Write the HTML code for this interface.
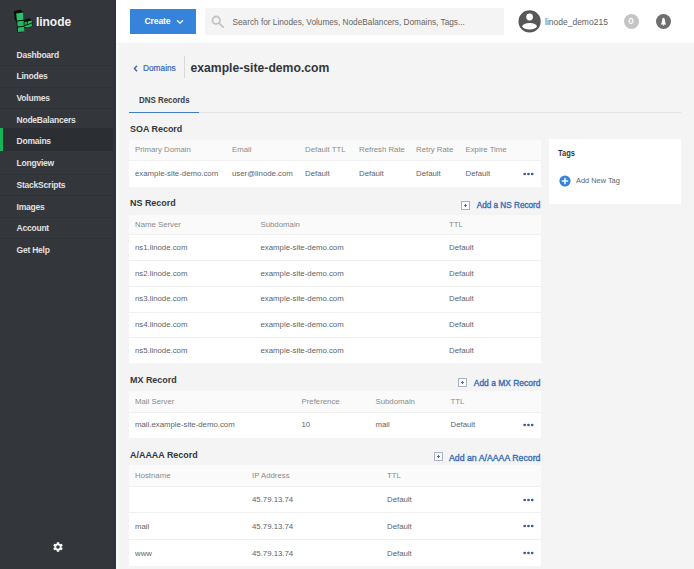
<!DOCTYPE html>
<html><head><meta charset="utf-8">
<style>
*{margin:0;padding:0;box-sizing:border-box}
html,body{width:694px;height:569px;overflow:hidden;background:#f4f4f4;font-family:"Liberation Sans",sans-serif}
.a{position:absolute}
#side{left:0;top:0;width:116px;height:569px;background:#33373c}
.nav{left:0;width:116px;height:22px;line-height:22px;padding-left:16.5px;color:#e0e0e0;font-weight:bold;font-size:8.5px;letter-spacing:-0.22px;white-space:nowrap}
.sep{left:0;width:116px;height:1px;background:#2e3237}
#hdr{left:116px;top:0;width:578px;height:43px;background:#fff;box-shadow:0 1px 1px rgba(0,0,0,0.015)}
.t{white-space:nowrap}
.sec{font-weight:bold;color:#32363c;font-size:9.9px;line-height:12px;transform:scaleX(0.905);transform-origin:0 50%}
.tbl{background:#fff}
.th{background:#fafafa;color:#8a8a8a;font-size:7.8px}
.td{color:#606469;font-size:7.8px}
.row{left:0;width:412px;border-top:1px solid #f0f0f0}
.cell{position:absolute;white-space:nowrap;margin-top:-0.5px}
.th .cell{margin-top:0px}
.dots{position:absolute;width:12px;height:6px}
.dots i{position:absolute;top:-1.5px;width:2.8px;height:2.8px;border-radius:50%;background:#3a64a8}
.add{color:#3a6db8;font-weight:normal;-webkit-text-stroke:0.35px #3a6db8;font-size:7.8px;line-height:12px;margin-top:1.8px}
.pbox{position:absolute;width:9px;height:9px;border:1px solid #aab3c4;background:#fafcff}
.pbox:before{content:"";position:absolute;left:2px;top:3px;width:3px;height:1px;background:#5b6aa3}
.pbox:after{content:"";position:absolute;left:3px;top:2px;width:1px;height:3px;background:#5b6aa3}
</style></head><body>
<div id="side" class="a">
  <!-- logo -->
  <svg class="a" style="left:0;top:0" width="40" height="40" viewBox="0 0 40 40">
    <polygon points="13.8,11.2 20,9.6 23.6,12.2 23.9,32 17.6,32.6 16.2,21.5 14.6,19.5" fill="#0b0f0c"/>
    <polygon points="16.2,13.6 23.3,12.4 23.5,19.8 16.9,20.6" fill="#2cbf6a"/>
    <polygon points="17.2,21.6 23.7,20.8 23.9,25.8 17.6,26.6" fill="#27b863"/>
    <polygon points="17.8,27.6 24.1,26.8 24.3,31.4 18.1,32.1" fill="#27b863"/>
    <polygon points="23.8,19.9 28.8,18.2 32.4,20.2 32.4,26.6 27.2,28.2 23.9,27.2" fill="#0b0f0c"/>
    <polygon points="24.4,22.2 27.2,21.6 27.3,24.2 24.4,25.2" fill="#1f9c55"/>
    <polygon points="27.8,21.4 31.9,20.4 31.9,22.6 27.8,24" fill="#2cbf6a"/>
    <polygon points="24.4,26.2 31.9,23.6 31.9,26.2 27.2,27.6 24.4,27" fill="#27b863"/>
  </svg>
  <div class="a t" style="left:36px;top:13.5px;font-size:12px;font-weight:bold;color:#f2f2f2;line-height:17px;letter-spacing:-0.05px">linode</div>

  <div class="a sep" style="top:65px"></div><div class="a sep" style="top:86.5px"></div><div class="a sep" style="top:108px"></div><div class="a sep" style="top:173.5px"></div><div class="a sep" style="top:195px"></div><div class="a sep" style="top:216.5px"></div><div class="a sep" style="top:238px"></div>
  <div class="a" style="left:0;top:128px;width:113px;height:23px;background:#2b2f34"></div>
  <div class="a" style="left:0;top:128px;width:3px;height:23px;background:#17b35b"></div>

  <div class="a nav" style="top:43.6px">Dashboard</div>
  <div class="a nav" style="top:65.3px">Linodes</div>
  <div class="a nav" style="top:87px">Volumes</div>
  <div class="a nav" style="top:108.8px">NodeBalancers</div>
  <div class="a nav" style="top:130.3px">Domains</div>
  <div class="a nav" style="top:152px">Longview</div>
  <div class="a nav" style="top:173.8px">StackScripts</div>
  <div class="a nav" style="top:195.5px">Images</div>
  <div class="a nav" style="top:217px">Account</div>
  <div class="a nav" style="top:238.8px">Get Help</div>

  <div class="a" style="left:113px;top:0;width:3px;height:569px;background:#303439"></div>
  <!-- gear -->
  <svg class="a" style="left:52px;top:541px" width="12" height="12" viewBox="0 0 24 24">
    <path fill="#fff" d="M19.14 12.94c.04-.3.06-.61.06-.94 0-.32-.02-.64-.07-.94l2.03-1.58a.49.49 0 0 0 .12-.61l-1.92-3.32a.49.49 0 0 0-.59-.22l-2.39.96c-.5-.38-1.03-.7-1.62-.94l-.36-2.54a.48.48 0 0 0-.48-.41h-3.84c-.24 0-.43.17-.47.41l-.36 2.54c-.59.24-1.13.57-1.62.94l-2.39-.96a.49.49 0 0 0-.59.22L2.74 8.87c-.12.21-.08.47.12.61l2.03 1.58c-.05.3-.09.63-.09.94s.02.64.07.94l-2.03 1.58a.49.49 0 0 0-.12.61l1.92 3.32c.12.22.37.29.59.22l2.39-.96c.5.38 1.03.7 1.62.94l.36 2.54c.05.24.24.41.48.41h3.84c.24 0 .44-.17.47-.41l.36-2.54c.59-.24 1.13-.56 1.62-.94l2.39.96c.22.08.47 0 .59-.22l1.92-3.32c.12-.22.07-.47-.12-.61l-2.01-1.58zM12 15.6A3.6 3.6 0 1 1 12 8.4a3.6 3.6 0 0 1 0 7.2z"/>
  </svg>
</div>

<div id="hdr" class="a">
  <div class="a" style="left:14px;top:9px;width:66px;height:25px;background:#3683dc"></div>
  <div class="a t" style="left:28.5px;top:15px;font-size:8.6px;letter-spacing:-0.15px;font-weight:bold;color:#fff;line-height:13px">Create</div>
  <svg class="a" style="left:60px;top:19px" width="8" height="6" viewBox="0 0 8 6"><polyline points="1,1.2 4,4.2 7,1.2" fill="none" stroke="#fff" stroke-width="1.3"/></svg>

  <div class="a" style="left:89px;top:8px;width:299px;height:26.5px;background:#f4f4f4"></div>
  <svg class="a" style="left:94px;top:13.5px" width="15" height="15" viewBox="0 0 15 15"><circle cx="6.2" cy="6.2" r="3.7" fill="none" stroke="#c4c4c4" stroke-width="1.8"/><line x1="8.9" y1="8.9" x2="13.2" y2="13.2" stroke="#c4c4c4" stroke-width="1.9" stroke-linecap="round"/></svg>
  <div class="a t" style="left:116.5px;top:16px;font-size:8.25px;color:#666;line-height:13px">Search for Linodes, Volumes, NodeBalancers, Domains, Tags...</div>

  <svg class="a" style="left:401.5px;top:10px" width="23" height="23" viewBox="0 0 23 23">
    <circle cx="11.6" cy="11.4" r="11.1" fill="#575757"/>
    <circle cx="11.6" cy="7" r="3.4" fill="#fff"/>
    <ellipse cx="11.6" cy="16.2" rx="7.2" ry="3.2" fill="#fff"/>
  </svg>
  <div class="a t" style="left:429px;top:16px;font-size:8.5px;color:#606060;line-height:13px">linode_demo215</div>
  <div class="a" style="left:507.5px;top:14px;width:15px;height:15px;border-radius:50%;background:#c4c4c4"></div>
  <div class="a t" style="left:507.5px;top:14px;width:15px;text-align:center;font-size:8.8px;-webkit-text-stroke:0.3px #fff;color:#fff;line-height:15px">0</div>
  <div class="a" style="left:540px;top:14px;width:15px;height:15px;border-radius:50%;background:#6e6e6e"></div>
  <svg class="a" style="left:540px;top:14px" width="15" height="15" viewBox="0 0 15 15"><path d="M7.5 3.7c-.6 0-1 .4-1.1 1L5.5 9.2 4.7 10.4h5.6L9.5 9.2 8.6 4.7c-.1-.6-.5-1-1.1-1z" fill="#fff"/><circle cx="7.5" cy="11" r=".8" fill="#fff"/></svg>
</div>

<!-- left light strip -->
<div class="a" style="left:116px;top:43px;width:3px;height:526px;background:#f9f9f9"></div>

<!-- breadcrumb -->
<svg class="a" style="left:133.3px;top:64.8px" width="5" height="7" viewBox="0 0 5 7"><polyline points="4,0.8 1.4,3.5 4,6.2" fill="none" stroke="#3a5f9e" stroke-width="1.3"/></svg>
<div class="a t" style="left:143px;top:62px;font-size:8.3px;color:#3868b5;-webkit-text-stroke:0.2px #3868b5;line-height:12px">Domains</div>
<div class="a" style="left:184px;top:56px;width:1px;height:22px;background:#d8d8d8"></div>
<div class="a t" style="left:190.5px;top:60px;font-size:12.2px;font-weight:bold;color:#32363c;line-height:17px">example-site-demo.com</div>

<!-- tabs -->
<div class="a t" style="left:139px;top:94px;font-size:8.8px;font-weight:bold;color:#383c42;line-height:12px;transform:scaleX(0.9);transform-origin:0 50%">DNS Records</div>
<div class="a" style="left:129px;top:112px;width:552px;height:1px;background:#e3e3e3"></div>
<div class="a" style="left:129px;top:111.6px;width:69.7px;height:1.8px;background:#4479cc"></div>

<!-- SOA -->
<div class="a t sec" style="left:129.7px;top:122.5px">SOA Record</div>
<div class="a tbl" style="left:129px;top:139.5px;width:412px;height:47px">
  <div class="a th" style="left:0;top:0;width:412px;height:20px;line-height:20px">
    <span class="cell" style="left:6px">Primary Domain</span>
    <span class="cell" style="left:103px">Email</span>
    <span class="cell" style="left:176px">Default TTL</span>
    <span class="cell" style="left:230px">Refresh Rate</span>
    <span class="cell" style="left:287px">Retry Rate</span>
    <span class="cell" style="left:336.5px">Expire Time</span>
  </div>
  <div class="a td row" style="top:20px;height:27px;line-height:27px">
    <span class="cell" style="left:6px">example-site-demo.com</span>
    <span class="cell" style="left:103px">user@linode.com</span>
    <span class="cell" style="left:176px">Default</span>
    <span class="cell" style="left:230px">Default</span>
    <span class="cell" style="left:287px">Default</span>
    <span class="cell" style="left:336.5px">Default</span>
    <svg class="dots" style="left:393.8px;top:10.0px" width="12" height="6" viewBox="0 0 12 6"><circle cx="1.7" cy="3" r="1.35" fill="#3b5794"/><circle cx="5.45" cy="3" r="1.35" fill="#3b5794"/><circle cx="9.2" cy="3" r="1.35" fill="#3b5794"/></svg>
  </div>
</div>

<!-- Tags -->
<div class="a" style="left:549.3px;top:139px;width:131.5px;height:65px;background:#fff"></div>
<div class="a t sec" style="left:558.2px;top:146.9px;font-size:8.3px">Tags</div>
<svg class="a" style="left:559px;top:174.7px" width="12" height="12" viewBox="0 0 12 12"><circle cx="6" cy="6" r="5.6" fill="#3683dc"/><rect x="2.8" y="5.3" width="6.4" height="1.4" fill="#fff"/><rect x="5.3" y="2.8" width="1.4" height="6.4" fill="#fff"/></svg>
<div class="a t" style="left:576px;top:175px;font-size:7.4px;color:#606469;line-height:12px">Add New Tag</div>

<!-- NS -->
<div class="a t sec" style="left:129.7px;top:197px">NS Record</div>
<div class="pbox" style="left:460.8px;top:201px"></div>
<div class="a t add" style="left:476.7px;top:198.7px;font-size:8.2px">Add a NS Record</div>
<div class="a tbl" style="left:129px;top:214.6px;width:412px;height:148.8px">
  <div class="a th" style="left:0;top:0;width:412px;height:20px;line-height:20px">
    <span class="cell" style="left:6px">Name Server</span>
    <span class="cell" style="left:131.5px">Subdomain</span>
    <span class="cell" style="left:320px">TTL</span>
  </div>
  <div class="a td row" style="top:19.5px;height:26px;line-height:26px"><span class="cell" style="left:6px">ns1.linode.com</span><span class="cell" style="left:131.5px">example-site-demo.com</span><span class="cell" style="left:320px">Default</span></div>
  <div class="a td row" style="top:45.5px;height:25.8px;line-height:25.8px"><span class="cell" style="left:6px">ns2.linode.com</span><span class="cell" style="left:131.5px">example-site-demo.com</span><span class="cell" style="left:320px">Default</span></div>
  <div class="a td row" style="top:71.2px;height:25.8px;line-height:25.8px"><span class="cell" style="left:6px">ns3.linode.com</span><span class="cell" style="left:131.5px">example-site-demo.com</span><span class="cell" style="left:320px">Default</span></div>
  <div class="a td row" style="top:97px;height:25.8px;line-height:25.8px"><span class="cell" style="left:6px">ns4.linode.com</span><span class="cell" style="left:131.5px">example-site-demo.com</span><span class="cell" style="left:320px">Default</span></div>
  <div class="a td row" style="top:122.8px;height:26px;line-height:26px"><span class="cell" style="left:6px">ns5.linode.com</span><span class="cell" style="left:131.5px">example-site-demo.com</span><span class="cell" style="left:320px">Default</span></div>
</div>

<!-- MX -->
<div class="a t sec" style="left:129.7px;top:374px">MX Record</div>
<div class="pbox" style="left:458.2px;top:378px"></div>
<div class="a t add" style="left:473.8px;top:374.9px;font-size:8.45px">Add a MX Record</div>
<div class="a tbl" style="left:129px;top:390.5px;width:412px;height:47px">
  <div class="a th" style="left:0;top:0;width:412px;height:21px;line-height:21px">
    <span class="cell" style="left:6px">Mail Server</span>
    <span class="cell" style="left:172.5px">Preference</span>
    <span class="cell" style="left:246.5px">Subdomain</span>
    <span class="cell" style="left:321.5px">TTL</span>
  </div>
  <div class="a td row" style="top:21px;height:26px;line-height:26px">
    <span class="cell" style="left:6px">mail.example-site-demo.com</span>
    <span class="cell" style="left:172.5px">10</span>
    <span class="cell" style="left:246.5px">mail</span>
    <span class="cell" style="left:321.5px">Default</span>
    <svg class="dots" style="left:393.8px;top:9.5px" width="12" height="6" viewBox="0 0 12 6"><circle cx="1.7" cy="3" r="1.35" fill="#3b5794"/><circle cx="5.45" cy="3" r="1.35" fill="#3b5794"/><circle cx="9.2" cy="3" r="1.35" fill="#3b5794"/></svg>
  </div>
</div>

<!-- A/AAAA -->
<div class="a t sec" style="left:129.7px;top:448.5px">A/AAAA Record</div>
<div class="pbox" style="left:434px;top:452.4px"></div>
<div class="a t add" style="left:449px;top:449.9px;font-size:8.75px">Add an A/AAAA Record</div>
<div class="a tbl" style="left:129px;top:464.8px;width:412px;height:101px">
  <div class="a th" style="left:0;top:0;width:412px;height:21px;line-height:21px">
    <span class="cell" style="left:6px">Hostname</span>
    <span class="cell" style="left:123px">IP Address</span>
    <span class="cell" style="left:258px">TTL</span>
  </div>
  <div class="a td row" style="top:21px;height:26.7px;line-height:27.7px"><span class="cell" style="left:123px">45.79.13.74</span><span class="cell" style="left:258px">Default</span><svg class="dots" style="left:393.8px;top:10.0px" width="12" height="6" viewBox="0 0 12 6"><circle cx="1.7" cy="3" r="1.35" fill="#3b5794"/><circle cx="5.45" cy="3" r="1.35" fill="#3b5794"/><circle cx="9.2" cy="3" r="1.35" fill="#3b5794"/></svg></div>
  <div class="a td row" style="top:47.7px;height:26.7px;line-height:27px"><span class="cell" style="left:6px">mail</span><span class="cell" style="left:123px">45.79.13.74</span><span class="cell" style="left:258px">Default</span><svg class="dots" style="left:393.8px;top:10.0px" width="12" height="6" viewBox="0 0 12 6"><circle cx="1.7" cy="3" r="1.35" fill="#3b5794"/><circle cx="5.45" cy="3" r="1.35" fill="#3b5794"/><circle cx="9.2" cy="3" r="1.35" fill="#3b5794"/></svg></div>
  <div class="a td row" style="top:74.4px;height:26.7px;line-height:28.3px"><span class="cell" style="left:6px">www</span><span class="cell" style="left:123px">45.79.13.74</span><span class="cell" style="left:258px">Default</span><svg class="dots" style="left:393.8px;top:10.0px" width="12" height="6" viewBox="0 0 12 6"><circle cx="1.7" cy="3" r="1.35" fill="#3b5794"/><circle cx="5.45" cy="3" r="1.35" fill="#3b5794"/><circle cx="9.2" cy="3" r="1.35" fill="#3b5794"/></svg></div>
</div>
</body></html>
